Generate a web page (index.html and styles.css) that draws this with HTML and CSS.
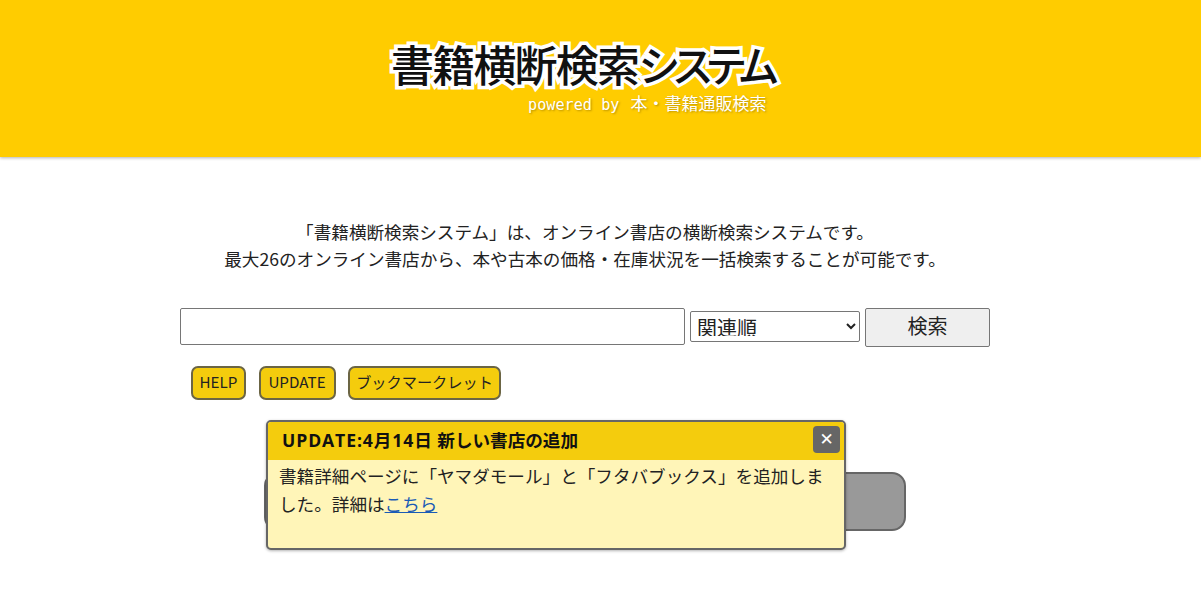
FILE: index.html
```html
<!DOCTYPE html>
<html lang="ja">
<head>
<meta charset="utf-8">
<title>書籍横断検索システム</title>
<link rel="stylesheet" href="styles.css">
</head>
<body>
<header class="site-header">
  <div class="logo">
    <div class="logo-title"><span class="logo-kanji">書籍横断検索</span><span class="logo-kana">システム</span></div>
    <div class="logo-sub"><span class="logo-sub-latin">powered by</span><span class="logo-sub-ja">本・書籍通販検索</span></div>
  </div>
</header>
<main class="page">
  <div class="intro">
    <p>「書籍横断検索システム」は、オンライン書店の横断検索システムです。</p>
    <p>最大26のオンライン書店から、本や古本の価格・在庫状況を一括検索することが可能です。</p>
  </div>
  <form class="search">
    <input class="search-input" type="text">
    <select class="search-select"><option>関連順</option></select>
    <button class="search-button" type="button">検索</button>
  </form>
  <div class="links">
    <a class="link-btn link-help">HELP</a>
    <a class="link-btn link-update">UPDATE</a>
    <a class="link-btn link-book">ブックマークレット</a>
  </div>
  <div class="gray-wrap"><div class="gray-btn"></div></div>
</main>
<div class="modal">
  <div class="modal-head">
    <span class="modal-title"><span class="modal-date">UPDATE:4月14日</span> 新しい書店の追加</span>
    <button class="modal-close" type="button">✕</button>
  </div>
  <div class="modal-body">書籍詳細ページに「ヤマダモール」と「フタバブックス」を追加しました。詳細は<a class="modal-link">こちら</a></div>
</div>
</body>
</html>
```
FILE: styles.css
```css
* { box-sizing: border-box; }
html, body { margin: 0; padding: 0; }
body {
  width: 1201px;
  height: 599px;
  overflow: hidden;
  background: #fff;
  color: #222;
  font-family: "Noto Sans CJK JP", sans-serif;
  font-size: 17.6px;
}
.site-header {
  height: 157px;
  background: #ffcc00;
  box-shadow: 0 1px 3px rgba(0, 0, 0, .3);
  padding-top: 34px;
  width: 100%;
}
.logo {
  width: 1170px;
  display: flex;
  flex-direction: column;
  align-items: center;
}
.logo-title {
  display: flex;
  align-items: baseline;
  height: 59px;
  line-height: 59px;
  color: #111;
  font-weight: 500;
  paint-order: stroke fill;
  -webkit-text-stroke: 7px #fff;
  text-shadow: 0 0 3px #fff;
}
.logo-kanji { font-size: 43px; letter-spacing: -1.8px; }
.logo-kana { font-size: 42px; letter-spacing: -8.5px; padding-right: 8px; }
.logo-sub {
  align-self: flex-start;
  display: flex;
  align-items: baseline;
  gap: 11px;
  margin-left: 528px;
  height: 20px;
  line-height: 20px;
  color: #fff;
  white-space: nowrap;
  text-shadow: 1px 1px 2px rgba(120, 90, 0, .5);
}
.logo-sub-latin { font-family: "DejaVu Sans Mono", monospace; font-size: 15.2px; }
.logo-sub-ja { font-size: 17px; }
.page { width: 1170px; }
.intro {
  padding-top: 61px;
  text-align: center;
  line-height: 27px;
}
.intro p { margin: 0; }
.search {
  margin: 36px 0 0 180px;
  display: flex;
  align-items: flex-start;
  gap: 5px;
}
.search-input {
  width: 505px;
  height: 37px;
  border: 1px solid #767676;
  border-radius: 2px;
  background: #fff;
}
.search-select {
  width: 170px;
  height: 31px;
  margin-top: 3px;
  border: 1px solid #767676;
  border-radius: 2px;
  background: #fff;
  color: #222;
  font: 20px/24px "Noto Sans CJK JP", sans-serif;
  padding: 0 0 5px 2px;
}
.search-button {
  width: 125px;
  height: 39px;
  border: 1px solid #767676;
  border-radius: 2px;
  background: #efefef;
  color: #222;
  font: 20px "Noto Sans CJK JP", sans-serif;
  padding: 0 0 4px;
}
.links {
  display: flex;
  margin: 19px 0 0 191px;
  gap: 12.5px;
}
.link-btn {
  height: 34px;
  line-height: 27px;
  border: 2px solid #6b6544;
  border-radius: 7px;
  background: #f4cc0d;
  font-size: 15.2px;
  color: #222;
  text-align: center;
}
.link-help { width: 55px; }
.link-update { width: 77px; }
.link-book { width: 153px; }
.gray-wrap { margin: 72px 0 0 264px; }
.gray-btn {
  width: 642px;
  height: 59px;
  background: #999;
  border: 2px solid #666;
  border-radius: 14px;
}
.modal {
  position: absolute;
  left: 266px;
  top: 420px;
  width: 580px;
  height: 130px;
  border: 2px solid #666;
  border-radius: 5px;
  background: #fff5b8;
  box-shadow: 0 1px 3px rgba(0, 0, 0, .3);
  overflow: hidden;
}
.modal-head {
  height: 38px;
  background: #f4cc0d;
  display: flex;
  align-items: center;
  justify-content: space-between;
  padding: 0 4px 0 14px;
}
.modal-title {
  font-family: "Open Sans", "Noto Sans CJK JP", sans-serif;
  font-size: 17.6px;
  font-weight: 700;
  color: #111;
  margin-top: -3px;
}
.modal-date { letter-spacing: .9px; }
.modal-close {
  width: 27px;
  height: 27px;
  margin-top: -4px;
  border: 0;
  border-radius: 4px;
  background: #666;
  color: #fff;
  font: 17px "DejaVu Sans", sans-serif;
  padding: 0;
}
.modal-body {
  padding: 2px 16px 0 11px;
  line-height: 28px;
  color: #222;
}
.modal-link { color: #1a5bb5; text-decoration: underline; }
```
